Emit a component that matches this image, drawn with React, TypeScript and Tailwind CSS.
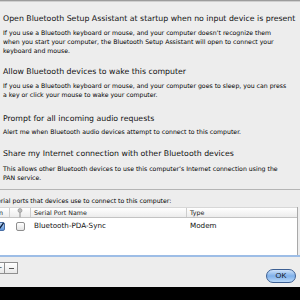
import React from 'react';

const font = { fontFamily: '"DejaVu Sans", "Liberation Sans", sans-serif' };

const Heading = ({ children, className = '' }: { children: React.ReactNode; className?: string }) => (
    <p className={`whitespace-nowrap text-[7.8px] leading-[12px] text-[#111] ${className}`}>{children}</p>
);

const Body = ({ lines, className = '' }: { lines: string[]; className?: string }) => (
    <div className={`text-[6.2px] leading-[9px] text-black ${className}`}>
        {lines.map(l => <p key={l} className="whitespace-nowrap">{l}</p>)}
    </div>
);

const KeyIcon = () => (
    <svg width="6" height="10" viewBox="0 0 6 10">
        <circle cx="3" cy="2.5" r="2" fill="#bdbdbd" stroke="#8a8a8a" strokeWidth="0.6" />
        <rect x="2.4" y="4.3" width="1.2" height="5" fill="#9a9a9a" />
    </svg>
);

const App = () => {
    return (
        <div className="w-[300px] h-[300px] overflow-hidden bg-[#ededed] flex flex-col" style={font}>
            <div className="h-[1px] bg-[#9c9c9c]" />
            <div className="h-[1px] bg-[#cfcfcf]" />
            <div className="pl-[3px]">
                <Heading className="mt-[11px]">Open Bluetooth Setup Assistant at startup when no input device is present</Heading>
                <Body className="mt-[3px]" lines={[
                    "If you use a Bluetooth keyboard or mouse, and your computer doesn\u2019t recognize them",
                    "when you start your computer, the Bluetooth Setup Assistant will open to connect your",
                    "keyboard and mouse.",
                ]} />
                <Heading className="mt-[11px]">Allow Bluetooth devices to wake this computer</Heading>
                <Body className="mt-[3px]" lines={[
                    "If you use a Bluetooth keyboard or mouse, and your computer goes to sleep, you can press",
                    "a key or click your mouse to wake your computer.",
                ]} />
                <Heading className="mt-[14px]">Prompt for all incoming audio requests</Heading>
                <Body className="mt-[2px]" lines={[
                    "Alert me when Bluetooth audio devices attempt to connect to this computer.",
                ]} />
                <Heading className="mt-[12px]">Share my Internet connection with other Bluetooth devices</Heading>
                <Body className="mt-[4px]" lines={[
                    "This allows other Bluetooth devices to use this computer\u2019s Internet connection using the",
                    "PAN service.",
                ]} />
            </div>
            <div className="mt-[7px] h-[1px] bg-[#b5b5b5]" />
            <p className="mt-[6px] -ml-[7px] whitespace-nowrap text-[6.2px] leading-[9px] text-black">Serial ports that devices use to connect to this computer:</p>

            <div className="mt-[2px] -ml-[8px] mr-[2px] bg-white border-r border-[#a9a9a9] h-[48px] flex flex-col">
                <div className="h-[11px] flex items-stretch bg-gradient-to-b from-white to-[#ececec] border-b border-[#c3c3c3] border-t border-t-[#d7d7d7] text-[6.3px] text-[#222]">
                    <div className="w-[18px] flex items-center pl-[2px] border-r border-[#cdcdcd]">On</div>
                    <div className="w-[21px] flex items-center justify-center border-r border-[#cdcdcd]"><KeyIcon /></div>
                    <div className="w-[156px] flex items-center pl-[3px] border-r border-[#cdcdcd]">Serial Port Name</div>
                    <div className="flex-1 flex items-center pl-[3px]">Type</div>
                </div>
                <div className="h-[16px] flex items-center text-[7.2px] text-[#111]">
                    <div className="w-[18px] flex justify-end pr-[5px]">
                        <div className="w-[9px] h-[9px] rounded-[2px] border border-[#4a6fa6] bg-gradient-to-b from-[#bcd6f4] to-[#5d93d8] flex items-center justify-center">
                            <svg width="8" height="8" viewBox="0 0 8 8"><path d="M1 4.2 L3.2 6.5 L7.5 0.5" fill="none" stroke="#0b1f3d" strokeWidth="1.4" /></svg>
                        </div>
                    </div>
                    <div className="w-[21px] flex justify-center">
                        <div className="w-[9px] h-[9px] rounded-[2px] border border-[#8e8e8e] bg-gradient-to-b from-white to-[#e4e4e4]" />
                    </div>
                    <div className="w-[156px] pl-[3px]">Bluetooth-PDA-Sync</div>
                    <div className="flex-1 pl-[3px]">Modem</div>
                </div>
            </div>
            <div className="h-[2px] bg-[#9dbde6]" />

            <div className="flex items-start">
                <div className="mt-[5px] -ml-[7px] flex">
                    <div className="w-[12px] h-[12px] border border-[#8f8f8f] bg-gradient-to-b from-white to-[#e8e8e8] flex items-center justify-center text-[8px] leading-none text-[#555]">+</div>
                    <div className="w-[13px] h-[12px] border border-l-0 border-[#8f8f8f] bg-gradient-to-b from-white to-[#e8e8e8] flex items-center justify-center">
                        <div className="w-[5px] h-[1px] bg-[#555]" />
                    </div>
                </div>
                <div className="flex-1" />
                <div className="mt-[12px] mr-[4px] w-[30px] h-[14px] rounded-full border border-[#3c5f93] bg-gradient-to-b from-[#cfe2f8] via-[#7fb0ea] to-[#b9d8f8] flex items-center justify-center text-[7.5px] text-[#111]" style={{ fontFamily: '"Liberation Sans", sans-serif' }}>OK</div>
            </div>
            <div className="flex-1 mt-[4px] bg-black" />
        </div>
    );
};

export default App;
